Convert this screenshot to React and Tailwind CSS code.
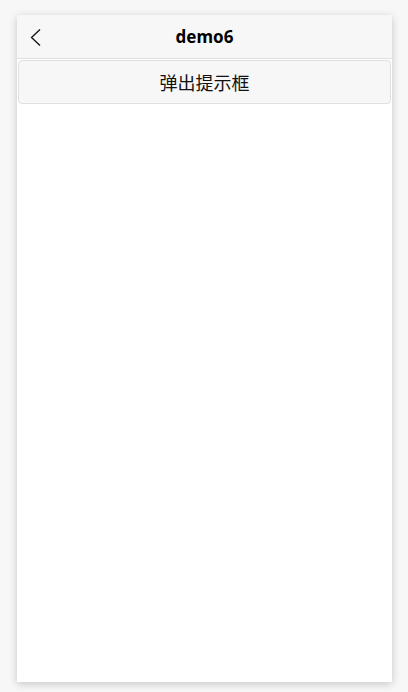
export default function App() {
  return (
    <div className="min-h-screen bg-[#f7f7f7] pl-[17px] pt-[15px]" style={{ fontFamily: '"Noto Sans", "Noto Sans CJK SC", sans-serif' }}>
      <div className="flex h-[667px] w-[375px] flex-col bg-white shadow-[0_2px_8px_rgba(0,0,0,0.2)]">
        <div className="relative flex h-[44px] shrink-0 items-center justify-center border-b border-[#e0e0e0] bg-[#f7f7f7]">
          <svg className="absolute left-[13px] top-[14px]" width="12" height="18" viewBox="0 0 12 18" fill="none">
            <path d="M10 0.5 L1.5 8.5 L10 16.5" stroke="#111" strokeWidth="1.3" />
          </svg>
          <span className="text-[17px] font-bold leading-none text-black">demo6</span>
        </div>
        <button className="mx-px mt-px flex h-[44px] items-center justify-center rounded-[4px] border border-[#e0e0e0] bg-[#f7f7f7] text-[18px] text-[#111]" style={{ fontFamily: '"Noto Sans CJK SC", sans-serif' }}>
          弹出提示框
        </button>
        <div className="flex-1" />
      </div>
    </div>
  );
}
